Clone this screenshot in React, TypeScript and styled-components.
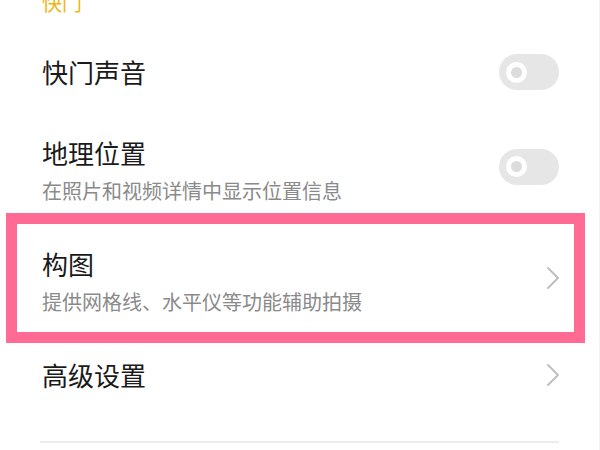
import React from "react";
import styled, { createGlobalStyle } from "styled-components";

const GlobalStyle = createGlobalStyle`
  html, body {
    margin: 0;
    padding: 0;
    background: #ffffff;
  }
  body {
    font-family: "Noto Sans CJK SC", "Noto Sans", sans-serif;
    overflow: hidden;
  }
`;

const Page = styled.div`
  width: 600px;
  height: 450px;
  box-sizing: border-box;
  border-right: 1px solid #f3f3f3;
  overflow: hidden;
  display: flex;
  flex-direction: column;
`;

const SectionHeader = styled.div`
  margin-top: -7px;
  height: 31px;
  padding-left: 42px;
  font-size: 20px;
  line-height: 20px;
  color: #f2b410;
`;

const Row = styled.div<{ $height: number; $highlight?: boolean }>`
  display: flex;
  align-items: center;
  justify-content: space-between;
  box-sizing: border-box;
  height: ${(p) => p.$height}px;
  padding: ${(p) => (p.$highlight ? "0 15px 0 25px" : "0 40px 0 42px")};
  margin: ${(p) => (p.$highlight ? "0 14px 0 6px" : "0")};
  border: ${(p) => (p.$highlight ? "11px solid #ff6b94" : "none")};
`;

const TextBlock = styled.div`
  display: flex;
  flex-direction: column;
  gap: 8px;
  padding-top: 6px;
`;

const Title = styled.div`
  font-size: 26px;
  line-height: 34px;
  color: #1a1a1a;
`;

const Subtitle = styled.div`
  font-size: 20px;
  line-height: 26px;
  color: #8a8a8a;
`;

const Track = styled.div`
  width: 60px;
  height: 36px;
  border-radius: 18px;
  background: #e6e6e6;
  display: flex;
  align-items: center;
  padding-left: 7px;
  box-sizing: border-box;
`;

const Knob = styled.div`
  width: 11px;
  height: 11px;
  border-radius: 50%;
  background: #dcdcdc;
  border: 5.5px solid #ffffff;
`;

const Divider = styled.div`
  margin: 34px 40px 0 40px;
  height: 2px;
  background: #ededed;
`;

const Toggle = () => (
  <Track>
    <Knob />
  </Track>
);

const Chevron = () => (
  <svg width="12" height="22" viewBox="0 0 12 22" fill="none">
    <polyline
      points="1,1 11,11 1,21"
      stroke="#bdbdbd"
      strokeWidth="1.8"
      strokeLinecap="round"
      strokeLinejoin="round"
    />
  </svg>
);

export default function App() {
  return (
    <>
      <GlobalStyle />
      <Page>
        <SectionHeader>快门</SectionHeader>
        <Row $height={96}>
          <Title>快门声音</Title>
          <Toggle />
        </Row>
        <Row $height={93}>
          <TextBlock>
            <Title>地理位置</Title>
            <Subtitle>在照片和视频详情中显示位置信息</Subtitle>
          </TextBlock>
          <Toggle />
        </Row>
        <Row $height={130} $highlight>
          <TextBlock>
            <Title>构图</Title>
            <Subtitle>提供网格线、水平仪等功能辅助拍摄</Subtitle>
          </TextBlock>
          <Chevron />
        </Row>
        <Row $height={64}>
          <Title>高级设置</Title>
          <Chevron />
        </Row>
        <Divider />
      </Page>
    </>
  );
}
